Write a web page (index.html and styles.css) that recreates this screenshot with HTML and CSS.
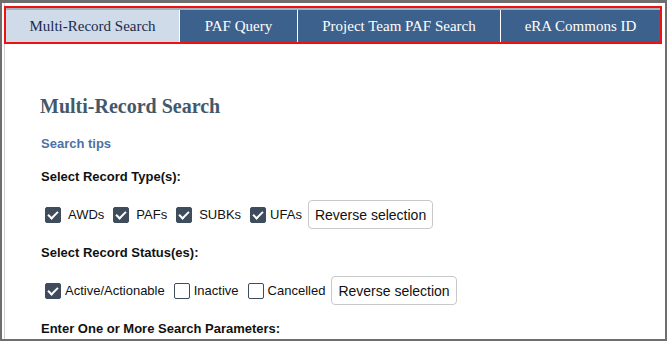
FILE: index.html
```html
<!DOCTYPE html>
<html>
<head>
<meta charset="utf-8">
<link rel="stylesheet" href="styles.css">
</head>
<body>
<div class="frame">
  <div class="inner">
    <nav class="tabs-box">
      <div class="tabs">
        <a class="tab tab-active t1">Multi-Record Search</a>
        <a class="tab t2">PAF Query</a>
        <a class="tab t3">Project Team PAF Search</a>
        <a class="tab t4">eRA Commons ID</a>
      </div>
    </nav>
    <main class="content">
      <h1 class="title">Multi-Record Search</h1>
      <a class="tips">Search tips</a>
      <div class="label">Select Record Type(s):</div>
      <div class="row">
        <label class="opt sp"><span class="cb on"></span>AWDs</label>
        <label class="opt sp"><span class="cb on"></span>PAFs</label>
        <label class="opt sp"><span class="cb on"></span>SUBKs</label>
        <label class="opt"><span class="cb on"></span>UFAs</label>
        <button class="btn">Reverse selection</button>
      </div>
      <div class="label">Select Record Status(es):</div>
      <div class="row">
        <label class="opt"><span class="cb on"></span>Active/Actionable</label>
        <label class="opt"><span class="cb"></span>Inactive</label>
        <label class="opt"><span class="cb"></span>Cancelled</label>
        <button class="btn">Reverse selection</button>
      </div>
      <div class="label">Enter One or More Search Parameters:</div>
    </main>
  </div>
</div>
</body>
</html>
```
FILE: styles.css
```css
html, body { margin: 0; padding: 0; background: #fff; }
.frame {
  width: 667px; height: 341px; box-sizing: border-box;
  border-top: 3px solid #6e6e6e; border-left: 2px solid #6e6e6e;
  border-right: 2px solid #6e6e6e; border-bottom: 2px solid #6e6e6e;
  overflow: hidden;
}
.inner {
  height: 100%; box-sizing: border-box;
  margin-left: 2px; border-left: 1px solid #d0d0d0;
  padding-top: 3px;
}
.tabs-box {
  width: 658px; box-sizing: border-box;
  margin-left: -1px;
  border: 2px solid #ee1111;
}
.tabs {
  display: flex; gap: 1px;
  border-top: 2px solid #a7b0bb;
  background: #fff;
}
.tab {
  height: 32px; display: flex; align-items: center; justify-content: center;
  background: #3d618d; color: #fff;
  font: 15px "Liberation Serif", serif;
}
.t1 { width: 173px; }
.t2 { width: 117px; }
.t3 { width: 202px; }
.t4 { flex: 1; }
.tab-active { background: #d0dbea; color: #1b2a4a; }
.content { padding-left: 33px; font-family: "Liberation Sans", Arial, sans-serif; }
.title {
  font: bold 20px "Liberation Serif", serif; color: #44586a;
  margin: 50px 0 0 2px; line-height: 24px;
}
.tips {
  display: block; margin: 18px 0 0 3px; font-size: 13px; font-weight: bold;
  color: #4b72a6; line-height: 16px;
}
.label {
  font-size: 13px; font-weight: bold; color: #111; line-height: 16px;
  margin-left: 3px;
}
.tips + .label { margin-top: 17px; }
.row {
  display: flex; align-items: center; height: 29px;
  margin: 15px 0 16px 7px;
  font-size: 13px; color: #111;
}
.opt { display: flex; align-items: center; gap: 4px; margin-right: 9px; }
.opt.sp { gap: 7px; }
.cb {
  width: 16px; height: 16px; box-sizing: border-box; border-radius: 2px;
  border: 1.5px solid #3e4c5c; background: #fff; position: relative;
}
.cb.on { background: #3e4c5c; }
.cb.on::after {
  content: ""; position: absolute; left: 4px; top: 1px;
  width: 4px; height: 8px; border: solid #fff; border-width: 0 2.5px 2.5px 0;
  transform: rotate(45deg);
}
.btn {
  height: 29px; padding: 0 6px; margin-left: -3px;
  border: 1px solid #c8c8c8; border-radius: 4px; background: #fff;
  font: 14px "Liberation Sans", Arial, sans-serif; color: #111;
}
```
